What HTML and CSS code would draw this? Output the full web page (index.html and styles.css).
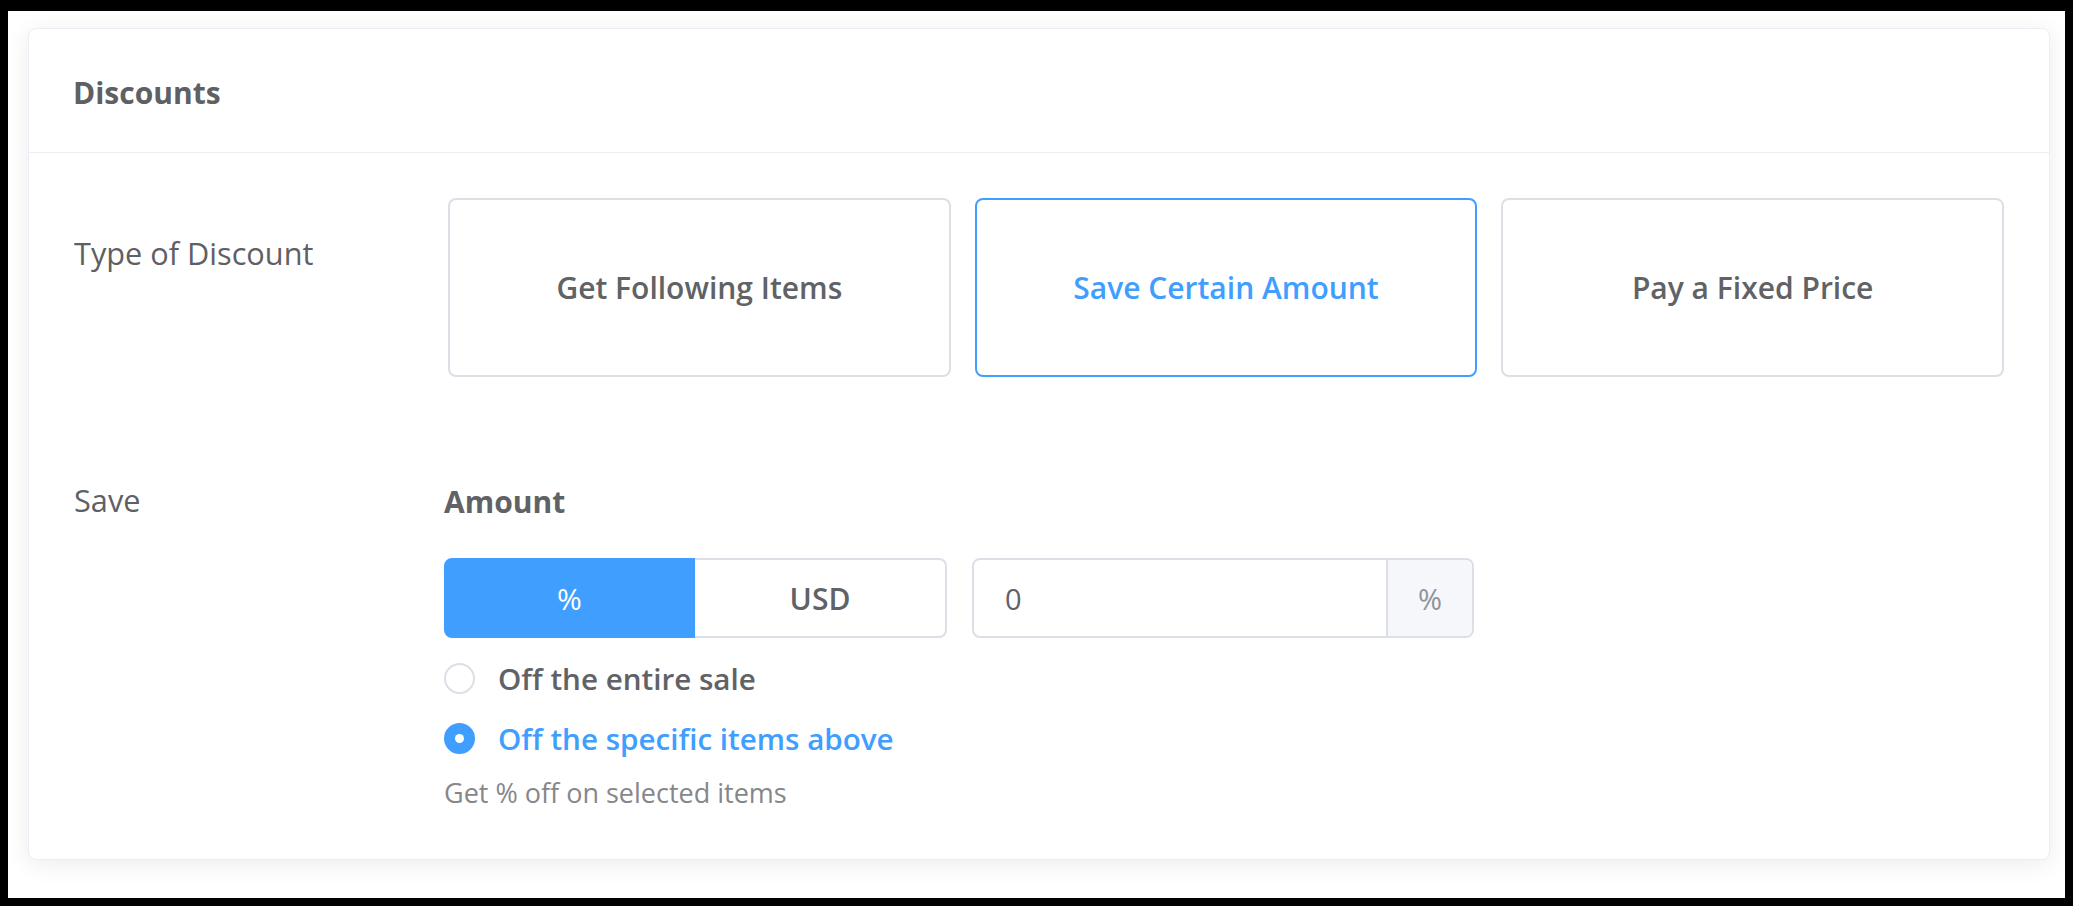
FILE: index.html
```html
<!DOCTYPE html>
<html>
<head>
<meta charset="utf-8">
<link rel="stylesheet" href="styles.css">
</head>
<body>
<div class="frame">
  <div class="card">
    <div class="card-header">Discounts</div>
    <div class="card-body">
      <div class="form-row">
        <div class="label label-type">Type of Discount</div>
        <div class="options">
          <div class="option">Get Following Items</div>
          <div class="option selected">Save Certain Amount</div>
          <div class="option">Pay a Fixed Price</div>
        </div>
      </div>
      <div class="form-row row-save">
        <div class="label">Save</div>
        <div class="save-content">
          <div class="amount-title">Amount</div>
          <div class="amount-controls">
            <div class="toggle">
              <div class="toggle-btn active">%</div>
              <div class="toggle-btn">USD</div>
            </div>
            <div class="input-group">
              <div class="input">0</div>
              <div class="append">%</div>
            </div>
          </div>
          <div class="radio-row">
            <span class="radio"></span>
            <span class="radio-label">Off the entire sale</span>
          </div>
          <div class="radio-row checked">
            <span class="radio"></span>
            <span class="radio-label">Off the specific items above</span>
          </div>
          <div class="help">Get % off on selected items</div>
        </div>
      </div>
    </div>
  </div>
</div>
</body>
</html>
```
FILE: styles.css
```css
* { box-sizing: border-box; }
html, body {
  margin: 0;
  padding: 0;
  background: #000;
}
body {
  font-family: "Open Sans", "Noto Sans", sans-serif;
  color: #606266;
  width: 2073px;
  height: 906px;
  overflow: hidden;
}
.frame {
  margin: 11px 8px 8px 8px;
  height: 887px;
  background: #ffffff;
  padding: 17px 15px 0 20px;
}
.card {
  width: 2022px;
  height: 832px;
  background: #fff;
  border: 1px solid #ebeef5;
  border-radius: 8px;
  box-shadow: 0 4px 24px rgba(0, 0, 0, 0.08);
}
.card-header {
  padding: 44px 44px 39px 44px;
  line-height: 40px;
  font-size: 30px;
  font-weight: 700;
  color: #5f6064;
  border-bottom: 1px solid #ebeef5;
}
.card-body {
  padding: 45px 45px 0 45px;
}
.form-row {
  display: grid;
  grid-template-columns: 370px 1fr;
}
.label {
  font-size: 30.7px;
  line-height: 40px;
  color: #5f6064;
}
.label-type {
  padding-top: 35px;
}
.options {
  display: grid;
  grid-template-columns: repeat(3, 1fr);
  gap: 24px;
  margin-left: 4px;
}
.option {
  height: 179px;
  border: 2px solid #dcdfe6;
  border-radius: 8px;
  display: flex;
  align-items: center;
  justify-content: center;
  font-size: 30px;
  font-weight: 600;
  color: #606266;
}
.option.selected {
  border-color: #409eff;
  color: #409eff;
}
.row-save {
  margin-top: 103px;
}
.amount-title {
  font-size: 30px;
  line-height: 40px;
  font-weight: 700;
  color: #606266;
  padding-top: 2px;
}
.amount-controls {
  display: grid;
  grid-template-columns: 503px 502px;
  gap: 25px;
  margin-top: 36px;
}
.toggle {
  display: grid;
  grid-template-columns: 251px 1fr;
  height: 80px;
}
.toggle-btn {
  display: flex;
  align-items: center;
  justify-content: center;
  font-size: 30px;
  font-weight: 600;
  color: #606266;
  border: 2px solid #dcdfe6;
  border-left: none;
  border-radius: 0 8px 8px 0;
  background: #fff;
}
.toggle-btn.active {
  background: #409eff;
  border-color: #409eff;
  border-left: 2px solid #409eff;
  color: #fff;
  border-radius: 8px 0 0 8px;
  font-weight: 400;
}
.input-group {
  display: flex;
  height: 80px;
  border: 2px solid #dcdfe6;
  border-radius: 8px;
  overflow: hidden;
}
.input {
  flex: 1;
  display: flex;
  align-items: center;
  padding-left: 31px;
  font-size: 29px;
  color: #606266;
}
.append {
  width: 86px;
  display: flex;
  align-items: center;
  justify-content: center;
  background: #f5f7fa;
  border-left: 2px solid #dcdfe6;
  font-size: 29px;
  color: #909399;
}
.radio-row {
  display: flex;
  align-items: center;
  height: 40px;
  margin-top: 20px;
}
.radio-row + .radio-row {
  margin-top: 20px;
}
.radio {
  width: 31px;
  height: 31px;
  border-radius: 50%;
  border: 2px solid #dcdfe6;
  background: #fff;
  margin-right: 23px;
  display: flex;
  align-items: center;
  justify-content: center;
  flex: none;
}
.radio-label {
  font-size: 29.6px;
  font-weight: 600;
  color: #606266;
}
.checked .radio {
  background: #409eff;
  border-color: #409eff;
}
.checked .radio::after {
  content: "";
  width: 9px;
  height: 9px;
  border-radius: 50%;
  background: #fff;
}
.checked .radio-label {
  color: #409eff;
}
.help {
  margin-top: 15px;
  font-size: 27px;
  line-height: 40px;
  color: #86878b;
}
```
